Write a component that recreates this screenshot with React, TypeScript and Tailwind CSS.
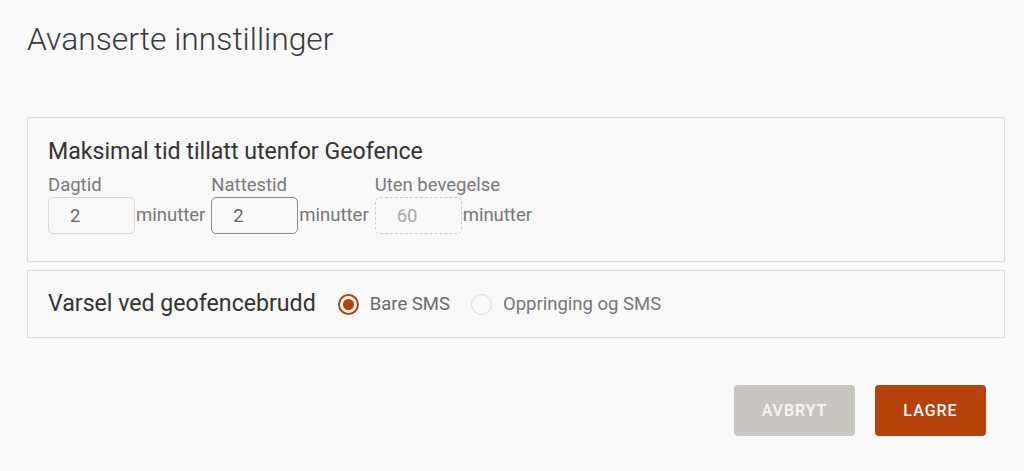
import React from "react";

function Field({ label, value, variant }: { label: string; value: string; variant: "plain" | "focus" | "disabled" }) {
  const box =
    variant === "plain"
      ? "border border-[#d9d9d9] text-[#666666]"
      : variant === "focus"
      ? "border border-[#8a8a8a] text-[#666666]"
      : "border border-dashed border-[#cfcfcf] text-[#a8a8a8]";
  return (
    <div className="flex flex-col">
      <span className="text-[18.5px] leading-[23px] text-[#7a7a7a]">{label}</span>
      <div className="flex items-center">
        <input
          readOnly
          disabled={variant === "disabled"}
          defaultValue={value}
          className={`h-[37px] w-[87px] rounded-[5px] bg-transparent px-[21px] text-[18.5px] outline-none ${box}`}
        />
        <span className="ml-px text-[18.5px] leading-[23px] text-[#777777]">minutter</span>
      </div>
    </div>
  );
}

export default function App() {
  return (
    <div className="min-h-[471px] bg-[#f8f8f8] pl-[27px] pr-[19px] pt-[19px] [font-family:Roboto,'Liberation_Sans',sans-serif]">
      <h1 className="text-[31.8px] font-light leading-[40px] text-[#3a3a3a]">Avanserte innstillinger</h1>

      <div className="mt-[58px] border border-[#dcdcdc] px-5 pb-[27px] pt-5">
        <h2 className="text-[23.15px] leading-[28px] text-[#333333]">Maksimal tid tillatt utenfor Geofence</h2>
        <div className="mt-2 flex gap-[6px]">
          <Field label="Dagtid" value="2" variant="plain" />
          <Field label="Nattestid" value="2" variant="focus" />
          <Field label="Uten bevegelse" value="60" variant="disabled" />
        </div>
      </div>

      <div className="mt-2 flex items-center border border-[#dcdcdc] px-5 py-[19px]">
        <span className="text-[23.15px] leading-[28px] text-[#333333]">Varsel ved geofencebrudd</span>
        <label className="ml-[22px] flex items-center">
          <span className="flex h-[21px] w-[21px] items-center justify-center rounded-full border-2 border-[#b5420a]">
            <span className="h-[11px] w-[11px] rounded-full bg-[#b5420a]" />
          </span>
          <span className="ml-[11px] text-[18.5px] leading-[23px] text-[#6b6b6b]">Bare SMS</span>
        </label>
        <label className="ml-[21px] flex items-center">
          <span className="h-[21px] w-[21px] rounded-full border-[1.5px] border-[#dadada]" />
          <span className="ml-[11px] text-[18.5px] leading-[23px] text-[#777777]">Oppringing og SMS</span>
        </label>
      </div>

      <div className="mt-[47px] flex justify-end gap-5 pr-[19px]">
        <button className="h-[51px] w-[121px] rounded-[4px] bg-[#c9c6c2] text-[16px] font-medium tracking-[1px] text-[#f7f7f7]">
          AVBRYT
        </button>
        <button className="h-[51px] w-[111px] rounded-[4px] bg-[#b5420a] text-[16px] font-medium tracking-[1px] text-[#f7f7f7]">
          LAGRE
        </button>
      </div>
    </div>
  );
}
